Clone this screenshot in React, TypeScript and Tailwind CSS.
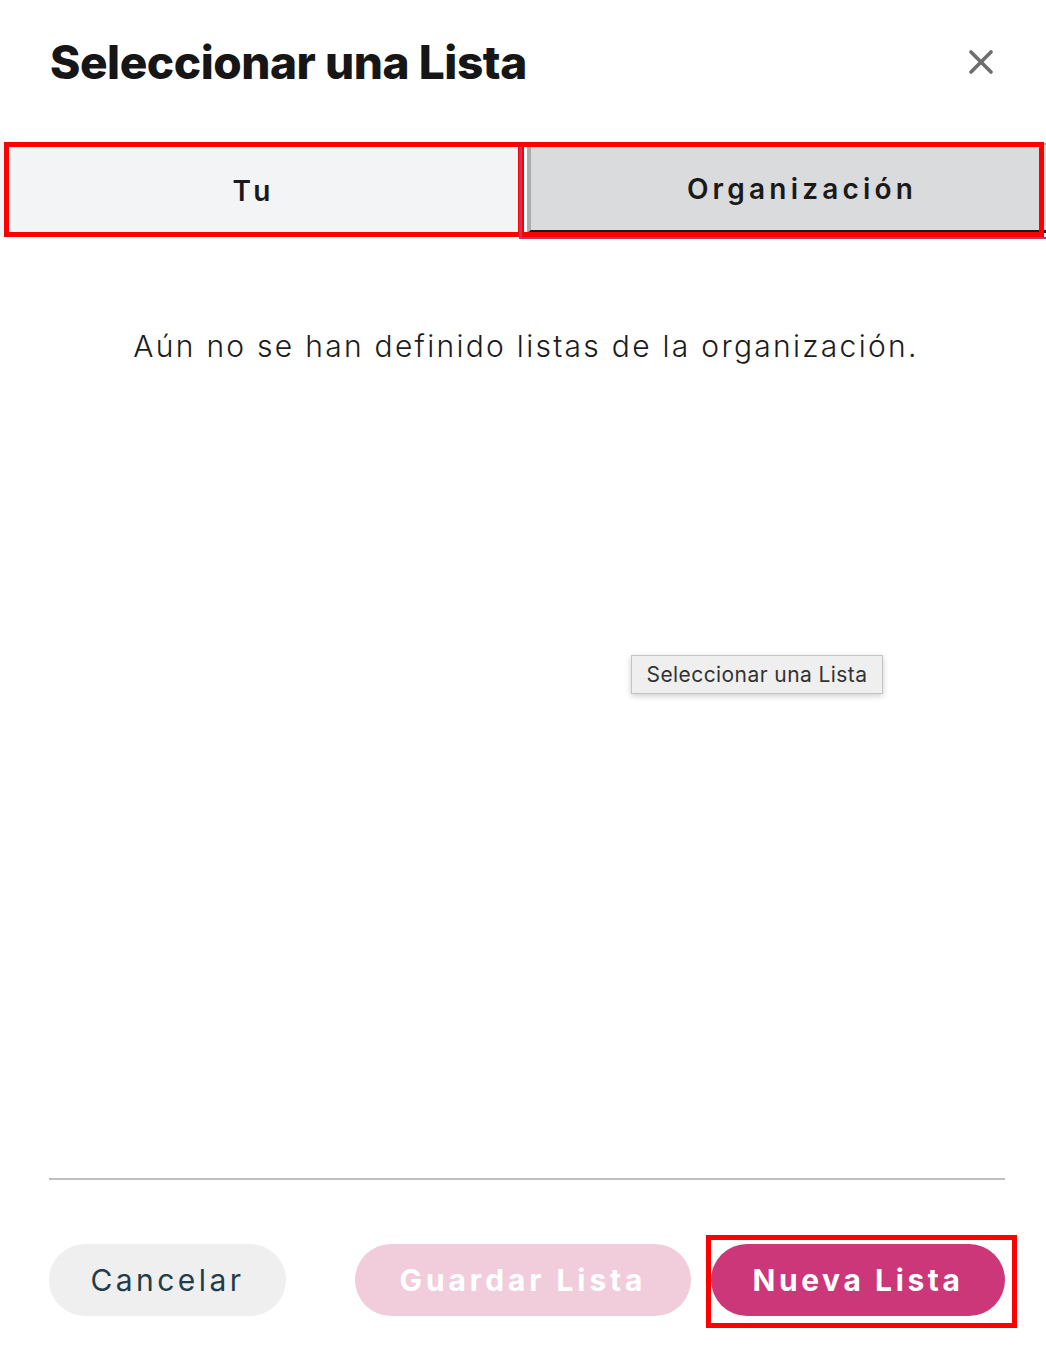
import { X } from "lucide-react";

const font = { fontFamily: "Inter, 'Noto Sans', sans-serif" };

const TabRow = () => (
  <div className="relative mt-[50px] h-[97px]">
    <div className="flex h-[95px]">
      <button className="w-[519px] shrink-0 h-full bg-[#f3f4f6] flex items-center justify-center pt-[2px] pr-[12px] text-[28px] font-semibold tracking-[0.15em] text-[#1a1a1a]">
        Tu
      </button>
      <button className="ml-[8px] mt-[1px] w-[546px] shrink-0 h-[90px] bg-[#dadbdd] border-l-4 border-t-2 border-b-[3px] border-l-[#acacac] border-t-[#acacac] border-b-[#1b1b1b] flex items-center justify-center pt-[2px] text-[28px] font-semibold tracking-[0.15em] text-[#1a1a1a]">
        Organización
      </button>
    </div>
    {/* annotation boxes */}
    <div className="absolute left-[4px] top-0 w-[519px] h-[95px] border-[5px] border-[#ff0000] pointer-events-none" />
    <div className="absolute left-[519px] top-0 w-[525px] h-[95px] border-[5px] border-[#ff0000] pointer-events-none" />
    <div className="absolute left-[519px] top-[5px] w-[540px] h-[92px] border-l-[3px] border-b-[2px] border-[#c9306f] pointer-events-none" />
  </div>
);

export default function App() {
  return (
    <div className="w-[1046px] h-[1350px] bg-white overflow-hidden flex flex-col" style={font}>
      <div className="flex items-center justify-between pl-[50px] pr-[45px] pt-[32px] h-[92px]">
        <h1 className="text-[46px] font-extrabold text-[#161616] tracking-[-0.01em] leading-none">
          Seleccionar una Lista
        </h1>
        <button className="text-[#6e6e6e]">
          <X size={40} strokeWidth={2.2} />
        </button>
      </div>

      <TabRow />

      <div className="relative flex-1">
        <p className="mt-[85px] pl-[6px] text-center text-[30px] font-light tracking-[0.076em] text-[#1c1c1c]">
          Aún no se han definido listas de la organización.
        </p>
        <div className="absolute left-[631px] top-[416px] w-[252px] h-[39px] bg-[#efefef] border border-[#c4c4c4] shadow-[0_2px_6px_rgba(0,0,0,0.2)] flex items-center justify-center text-[21px] tracking-[0.02em] text-[#333]">
          Seleccionar una Lista
        </div>
      </div>

      <div className="pl-[49px] pr-[41px]">
        <div className="h-[2px] bg-[#bfbfbf]" />
        <div className="flex items-center mt-[64px] mb-[34px] h-[72px]">
          <button className="w-[237px] shrink-0 h-[72px] rounded-full bg-[#efefef] text-[30px] tracking-[0.115em] text-[#1f3d4a]">
            Cancelar
          </button>
          <button className="ml-[69px] w-[336px] shrink-0 h-[72px] rounded-full bg-[#f1cddc] text-[30px] font-bold tracking-[0.13em] text-white">
            Guardar Lista
          </button>
          <div className="relative ml-[20px] shrink-0">
            <button className="w-[294px] h-[72px] rounded-full bg-[#cb3778] text-[30px] font-bold tracking-[0.12em] text-white">
              Nueva Lista
            </button>
            <div className="absolute left-[-5px] top-[-9px] w-[311px] h-[93px] border-[5px] border-[#ff0000] pointer-events-none" />
          </div>
        </div>
      </div>
    </div>
  );
}
